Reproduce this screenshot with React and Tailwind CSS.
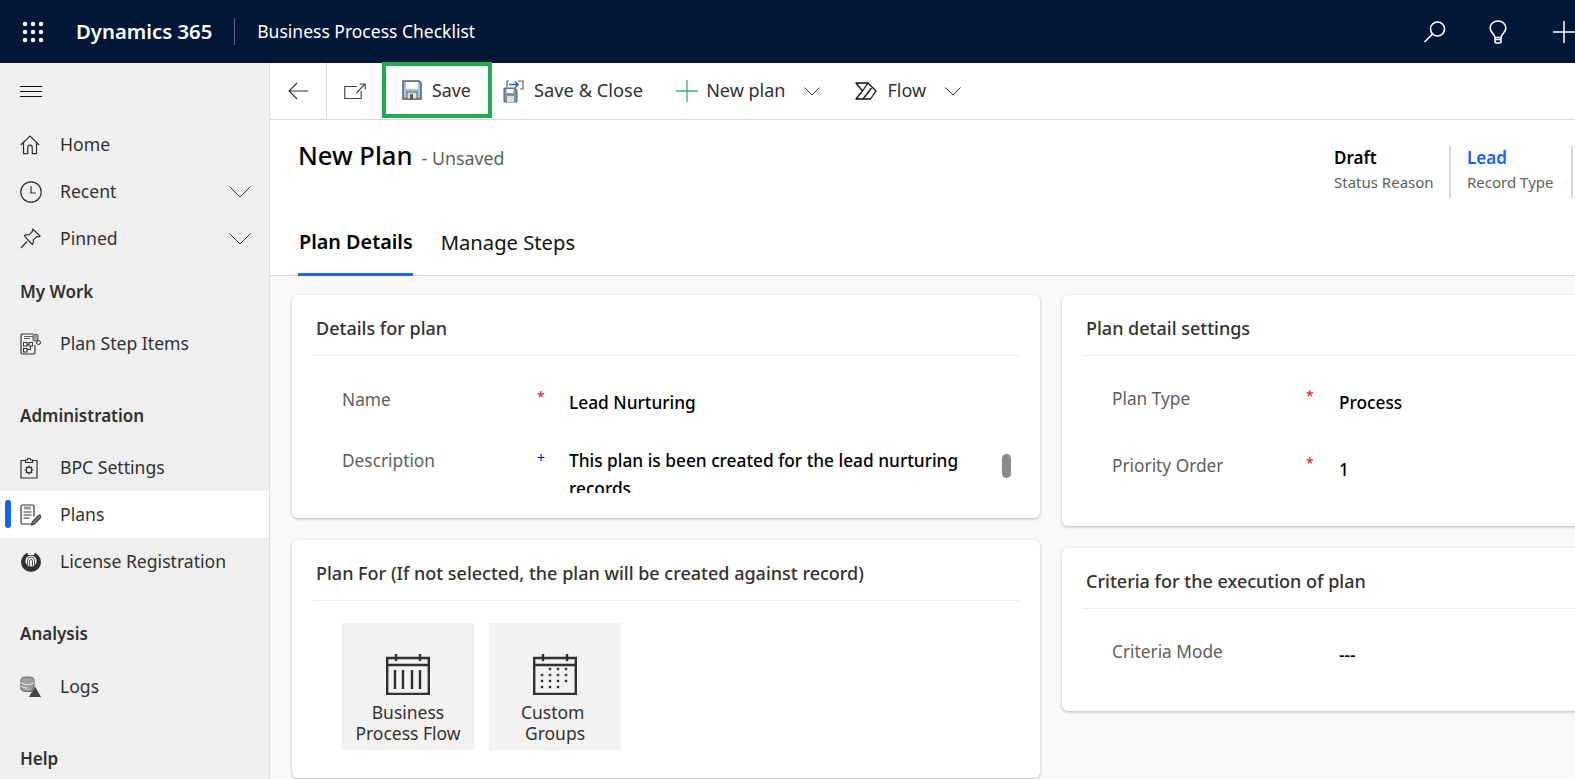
function Chevron({ width, height, className }) {
	return (
		<svg className={className} width={width} height={height} viewBox={`0 0 ${width} ${height}`} fill="none" stroke="#323130" strokeWidth="1">
			<path d={`M.5 .5 ${width / 2} ${height - 1} ${width - 0.5} .5`} />
		</svg>
	)
}

function Waffle() {
	const dots = []
	for (let y = 0; y < 3; y++) {
		for (let x = 0; x < 3; x++) {
			dots.push(<circle key={`${x}-${y}`} cx={3 + x * 8} cy={3 + y * 8} r="2.2" fill="#fff" />)
		}
	}
	return <svg width="22" height="22" viewBox="0 0 22 22">{dots}</svg>
}

function SearchIcon() {
	return (
		<svg width="24" height="24" viewBox="0 0 24 24" fill="none" stroke="#fff" strokeWidth="1.6">
			<circle cx="14.5" cy="9" r="7" />
			<path d="M9.5 14 1.5 22" />
		</svg>
	)
}

function BulbIcon() {
	return (
		<svg width="18" height="24" viewBox="0 0 18 24" fill="none" stroke="#fff" strokeWidth="1.6">
			<path d="M6 17.5C5.5 14 1.2 12.5 1.2 8.2 1.2 4 4.6 1 9 1s7.8 3 7.8 7.2c0 4.3-4.3 5.8-4.8 9.3Z" />
			<path d="M6 17.5v4.2c0 .8.5 1.3 1.2 1.3h3.6c.7 0 1.2-.5 1.2-1.3v-4.2M6 19.5h6" />
		</svg>
	)
}

function Hamburger() {
	return (
		<svg width="22" height="12" viewBox="0 0 22 12" stroke="#111">
			<path d="M0 .5h22M0 5.5h22M0 10.5h22" />
		</svg>
	)
}

function HomeIcon() {
	return (
		<svg width="20" height="20" viewBox="0 0 20 20" fill="none" stroke="#323130" strokeWidth="1.2">
			<path d="M.8 10 10 1l9.2 9M3.5 7.5v11.2h4.2v-6.2a2.3 2.3 0 0 1 4.6 0v6.2h4.2V7.5" />
		</svg>
	)
}

function ClockIcon() {
	return (
		<svg width="22" height="22" viewBox="0 0 22 22" fill="none" stroke="#323130" strokeWidth="1.2">
			<circle cx="11" cy="11" r="10.2" />
			<path d="M11 5v7h5" />
		</svg>
	)
}

function PinIcon() {
	return (
		<svg width="21" height="21" viewBox="0 0 21 21" fill="none" stroke="#323130" strokeWidth="1.2">
			<path d="M13 1.2 20 8l-1.3 1-1.8-.5-3.6 3.4c.5 1.7.2 3.2-.8 4.6L8 12l-3.5-4.5c1.4-1 3-1.2 4.6-.7l3.4-3.7Z" />
			<path d="m7 13.5-6 6.5" />
		</svg>
	)
}

function PlanStepIcon() {
	return (
		<svg width="22" height="22" viewBox="0 0 22 22" fill="none" stroke="#323130" strokeWidth="1">
			<path d="M13 1H2.500A1.500 1.500 0 0 0 1 2.500v17A1.500 1.500 0 0 0 2.500 21h11a1.500 1.500 0 0 0 1.500-1.500V12" strokeWidth="1.2" />
			<path d="M4 3.500h9M4 5.500h6" stroke="#605e5c" />
			<rect x="13" y="1.500" width="5" height="6.500" rx="1" fill="#a19f9d" stroke="#605e5c" />
			<circle cx="18.500" cy="9.500" r="2" />
			<rect x="3.500" y="9.500" width="3.500" height="3.500" />
			<rect x="9" y="9.500" width="3.500" height="3.500" />
			<rect x="3.500" y="15.500" width="3.500" height="3.500" />
			<path d="M7 11.250h2M10.500 13v3.500H7" />
		</svg>
	)
}

function BpcIcon() {
	return (
		<svg width="18" height="22" viewBox="0 0 18 22" fill="none" stroke="#323130" strokeWidth="1.2">
			<path d="M5.500 3.500H1v17.500h16V3.500h-4.500" />
			<path d="M5.500 5.500V3H7.300a1.700 1.700 0 0 1 3.400 0h1.800v2.500Z" />
			<circle cx="9" cy="13" r="2.800" />
			<path d="M9 8.500v1.700M9 15.800v1.700M4.500 13h1.700M11.800 13h1.700M5.800 9.800l1.200 1.200M11 15l1.200 1.200M12.200 9.800 11 11M7 15l-1.200 1.200" />
		</svg>
	)
}

function PlansIcon() {
	return (
		<svg width="21" height="22" viewBox="0 0 21 22" fill="none" stroke="#323130" strokeWidth="1.1">
			<path d="M11 20H2.500A1.500 1.500 0 0 1 1 18.500v-16A1.500 1.500 0 0 1 2.500 1h10A1.500 1.500 0 0 1 14 2.500v10" strokeWidth="1.2" />
			<rect x="4" y="2.500" width="7" height="3" fill="#a19f9d" stroke="none" />
			<path d="M3.500 8h8M3.500 11h8M3.500 14h6" />
			<path d="m11.500 21 .7-3 6.500-6.500c.7-.6 1.500-.5 2 0s.5 1.300 0 1.900L14.300 20Z" fill="#8a8886" stroke="#323130" />
		</svg>
	)
}

function LicenseIcon() {
	return (
		<svg width="22" height="21" viewBox="0 0 22 21">
			<circle cx="11" cy="11" r="10" fill="#323130" />
			<path d="M7 0h8l-1 4H8Z" fill="#efefef" />
			<circle cx="11" cy="10" r="5.600" fill="#efefef" />
			<path d="M7.500 15V9.500a3.500 3.500 0 0 1 7 0V15" fill="none" stroke="#605e5c" strokeWidth="1" />
			<path d="M9.500 15v-5a1.500 1.500 0 0 1 3 0v5" fill="none" stroke="#605e5c" strokeWidth="1" />
		</svg>
	)
}

function LogsIcon() {
	return (
		<svg width="21" height="21" viewBox="0 0 21 21">
			<path d="M1 3.500C1 1.800 4 1 7.500 1s6.500.8 6.500 2.500V10l-2.500 5.500H7.500C4 15.500 1 14.700 1 13Z" fill="#a19f9d" stroke="#605e5c" />
			<path d="M1 6.500c1 1.500 3.500 2 6.500 2s5.500-.5 6.500-2M1 10c1 1.500 3.500 2 6.500 2" fill="none" stroke="#efefef" />
			<path d="M15 10.500 21 21H9Z" fill="#484644" />
		</svg>
	)
}

function BackIcon() {
	return (
		<svg width="20" height="18" viewBox="0 0 20 18" fill="none" stroke="#323130" strokeWidth="1.1">
			<path d="M20 9H1M9 1 1 9l8 8" />
		</svg>
	)
}

function PopoutIcon() {
	return (
		<svg width="22" height="16" viewBox="0 0 22 16" fill="none" strokeWidth="1.2">
			<path d="M13 3.500H.8v12h16.400V8" stroke="#484644" />
			<path d="m12.500 10 8-8.500M15.500 1h5.700v5.500" stroke="#484644" />
		</svg>
	)
}

function SaveIcon() {
	return (
		<svg width="20" height="20" viewBox="0 0 20 20">
			<path d="M1 1h16l2 2v16H1Z" fill="#9cc3e6" stroke="#605e5c" strokeWidth="1.500" />
			<rect x="4" y="2" width="12" height="7" fill="#fff" />
			<rect x="5" y="12" width="10" height="7" fill="#e1dfdd" stroke="#605e5c" />
			<rect x="8" y="14" width="3" height="5" fill="#605e5c" />
		</svg>
	)
}

function SaveCloseIcon() {
	return (
		<svg width="21" height="23" viewBox="0 0 21 23" fill="none">
			<path d="M4 7V1h2M15 1h5v8h-3" stroke="#605e5c" strokeWidth="1.200" />
			<path d="M6 4.500h9M12 1.500l3 3-3 3" stroke="#0f6cbd" strokeWidth="1.600" />
			<path d="M1 8h11l2 2v12H1Z" fill="#7d93a8" stroke="#605e5c" />
			<rect x="3.500" y="9" width="7" height="4" fill="#fff" />
			<rect x="4" y="16" width="7" height="6" fill="#e1dfdd" />
		</svg>
	)
}

function PlusIcon() {
	return (
		<svg className="-mr-[2px]" width="22" height="22" viewBox="0 0 22 22" stroke="#3cb371" strokeWidth="1.300">
			<path d="M11 0v22M0 11h22" />
		</svg>
	)
}

function FlowIcon() {
	return (
		<svg width="22" height="18" viewBox="0 0 22 18" fill="none" stroke="#111" strokeWidth="1.300" strokeLinejoin="round">
			<path d="M1 1h12l8 8-5.500 8H1l6.500-8Z" />
			<path d="M7.500 9 13 1M8 17l8.500-11" />
		</svg>
	)
}

function CalendarBars() {
	return (
		<svg width="44" height="42" viewBox="0 0 44 42" fill="none" stroke="#323130" strokeWidth="2.4">
			<path d="M1.200 5h41.600v36H1.200ZM1.200 12h41.600M10 1v7M34 1v7" />
			<path d="M9 17v19M17 17v19M26 17v19M34 17v19" />
		</svg>
	)
}

function CalendarDots() {
	const dots = [
		[17, 16], [25, 16], [33, 16],
		[9, 22], [17, 22], [25, 22], [33, 22],
		[9, 28], [17, 28], [25, 28], [33, 28],
		[9, 34], [17, 34], [25, 34],
	]
	return (
		<svg width="44" height="42" viewBox="0 0 44 42" fill="none" stroke="#323130" strokeWidth="2.4">
			<path d="M1.200 5h41.600v36H1.200ZM1.200 12h41.600M10 1v7M34 1v7" />
			{dots.map(([x, y]) => (
				<rect key={`${x}-${y}`} x={x - 1.200} y={y - 1.200} width="2.400" height="2.400" fill="#323130" stroke="none" />
			))}
		</svg>
	)
}

function NavItem({ icon, label, chevron, active }) {
	return (
		<div className={`relative flex h-[47px] items-center pl-5 pr-[18px] ${active ? 'bg-white' : ''}`}>
			{active && <span className="absolute left-[5px] top-[9px] h-[28px] w-[6px] rounded-full bg-[#0f62fe]" />}
			<span className="flex w-[40px] items-center">{icon}</span>
			<span className="text-[17.600px] text-[#323130]">{label}</span>
			{chevron && <Chevron className="ml-auto" width={22} height={12} />}
		</div>
	)
}

function NavHeading({ label, className }) {
	return <div className={`flex h-[47px] items-center pl-5 text-[17px] font-semibold text-[#323130] ${className}`}>{label}</div>
}

function Sidebar() {
	return (
		<aside className="w-[270px] shrink-0 border-r border-[#e1dfdd] bg-[#efefef]">
			<div className="flex h-[58px] items-center pb-px pl-5"><Hamburger /></div>
			<NavItem icon={<HomeIcon />} label="Home" />
			<NavItem icon={<ClockIcon />} label="Recent" chevron />
			<NavItem icon={<PinIcon />} label="Pinned" chevron />
			<NavHeading label="My Work" className="mt-[6px]" />
			<div className="mt-[5px]"><NavItem icon={<PlanStepIcon />} label="Plan Step Items" /></div>
			<NavHeading label="Administration" className="mt-[25px]" />
			<div className="mt-[5px]">
				<NavItem icon={<BpcIcon />} label="BPC Settings" />
				<NavItem icon={<PlansIcon />} label="Plans" active />
				<NavItem icon={<LicenseIcon />} label="License Registration" />
			</div>
			<NavHeading label="Analysis" className="mt-[25px]" />
			<div className="mt-[6px]"><NavItem icon={<LogsIcon />} label="Logs" /></div>
			<NavHeading label="Help" className="mt-[25px]" />
		</aside>
	)
}

function ToolButton({ icon, label, chevron, labelSize = 'text-[18px]', className }) {
	return (
		<button className={`flex h-full items-center ${className}`}>
			{icon}
			<span className={`ml-[10px] pb-[2px] text-[#323130] ${labelSize}`}>{label}</span>
			{chevron && <Chevron className="ml-[19px]" width={16} height={9} />}
		</button>
	)
}

function Toolbar() {
	return (
		<div className="flex h-[57px] shrink-0 border-b border-[#d8d8d8] bg-white">
			<button className="flex w-[57px] items-center justify-center border-r border-[#d8d8d8]"><BackIcon /></button>
			<button className="flex w-[55px] items-center justify-center"><PopoutIcon /></button>
			<button className="-mt-px box-border flex h-[56px] w-[110px] items-center border-[4px] border-[#21ad4f] pl-[16px]">
				<SaveIcon />
				<span className="ml-[10px] text-[17.800px] text-[#323130]">Save</span>
			</button>
			<ToolButton icon={<SaveCloseIcon />} label="Save &amp; Close" labelSize="text-[18.300px]" className="ml-[11px]" />
			<ToolButton icon={<PlusIcon />} label="New plan" chevron className="ml-[33px]" />
			<ToolButton icon={<FlowIcon />} label="Flow" chevron className="ml-[35px]" />
		</div>
	)
}

function Stat({ value, label, valueClass, className }) {
	return (
		<div className={`h-[52px] ${className}`}>
			<div className={`text-[17px] leading-[24px] font-semibold ${valueClass}`}>{value}</div>
			<div className="text-[15px] leading-[25px] text-[#605e5c]">{label}</div>
		</div>
	)
}

function RecordHeader() {
	return (
		<div className="h-[156px] shrink-0 border-b border-[#d8d4d0] bg-white pl-[28px]">
			<div className="flex pt-[20px]">
				<div className="flex items-baseline self-start">
					<h1 className="text-[25.600px] leading-[32px] font-medium text-black">New Plan</h1>
					<span className="ml-[9px] text-[17.800px] text-[#605e5c]">- Unsaved</span>
				</div>
				<div className="ml-auto flex pt-[6px] pr-[2px]">
					<Stat value="Draft" label="Status Reason" valueClass="text-black" className="w-[117px] border-r-2 border-[#d8d8d8]" />
					<Stat value="Lead" label="Record Type" valueClass="text-[#0f62fe]" className="ml-[16px] w-[106px] border-r-2 border-[#d8d8d8]" />
				</div>
			</div>
			<div className="mt-[25px] flex">
				<div className="flex h-[53px] items-center border-b-[3px] border-[#2266e3] pb-[12px] pl-px text-[19.800px] font-semibold text-black">Plan Details</div>
				<div className="ml-[28px] flex h-[53px] items-center border-b-[3px] border-transparent pb-[12px] text-[20.200px] text-[#111]">Manage Steps</div>
			</div>
		</div>
	)
}

function Card({ title, className, children }) {
	return (
		<section className={`rounded-[6px] bg-white shadow-[0_1px_3px_rgba(0,0,0,0.28)] ${className}`}>
			<div className="mx-[21px] flex h-[61px] items-center border-b border-[#ececec] pt-[6px] pl-[3px] text-[18px] font-medium text-[#323130]">{title}</div>
			{children}
		</section>
	)
}

function Field({ label, marker = '*', markerClass = 'text-[#e81123]', labelWidth, markerWidth, className, children }) {
	return (
		<div className={`flex ${className}`}>
			<div className={`text-[17.300px] leading-[26px] text-[#605e5c] ${labelWidth}`}>{label}</div>
			<div className={`text-[14px] leading-[20px] ${markerClass} ${markerWidth}`}>{marker}</div>
			{children}
		</div>
	)
}

function FieldValue({ className = 'mt-[3px]', children }) {
	return <div className={`text-[17.300px] leading-[26px] font-medium text-black ${className}`}>{children}</div>
}

function PlanTile({ icon, lines }) {
	return (
		<div className="flex h-[127px] w-[132px] flex-col items-center bg-[#f3f2f1] pt-[30px]">
			{icon}
			<div className="mt-[7px] whitespace-pre text-center text-[17.500px] leading-[21px] text-[#323130]">
				{lines.map(line => <div key={line}>{line}</div>)}
			</div>
		</div>
	)
}

function Content() {
	return (
		<div className="flex min-h-0 flex-1 gap-[22px] bg-[#faf9f8] pt-[19px] pl-[22px]">
			<div className="flex w-[748px] shrink-0 flex-col gap-[22px]">
				<Card title="Details for plan" className="h-[223px]">
					<Field label="Name" labelWidth="w-[195px]" markerWidth="w-[32px]" className="mt-[31px] pl-[50px]">
						<FieldValue>Lead Nurturing</FieldValue>
					</Field>
					<Field label="Description" marker="+" markerClass="text-[#0000ff]" labelWidth="w-[195px]" markerWidth="w-[32px]" className="relative mt-[32px] pl-[50px]">
						<div className="-mt-px h-[46px] w-[410px] overflow-hidden text-[17.300px] leading-[28px] font-medium text-black">
							This plan is been created for the lead nurturing records
						</div>
						<span className="absolute left-[710px] top-[6px] h-[24px] w-[9px] rounded-full bg-[#8a8a8a]" />
					</Field>
				</Card>
				<Card title="Plan For (If not selected, the plan will be created against record)" className="h-[238px]">
					<div className="flex gap-[15px] pt-[22px] pl-[50px]">
						<PlanTile icon={<CalendarBars />} lines={['Business', 'Process Flow']} />
						<PlanTile icon={<CalendarDots />} lines={['Custom ', 'Groups']} />
					</div>
				</Card>
			</div>
			<div className="flex w-[748px] shrink-0 flex-col gap-[22px]">
				<Card title="Plan detail settings" className="h-[231px]">
					<Field label="Plan Type" labelWidth="w-[194px]" markerWidth="w-[33px]" className="mt-[30px] pl-[50px]">
						<FieldValue className="mt-[4px]">Process</FieldValue>
					</Field>
					<Field label="Priority Order" labelWidth="w-[194px]" markerWidth="w-[33px]" className="mt-[37px] pl-[50px]">
						<FieldValue className="mt-[4px]">1</FieldValue>
					</Field>
				</Card>
				<Card title="Criteria for the execution of plan" className="h-[163px]">
					<Field label="Criteria Mode" marker="" labelWidth="w-[194px]" markerWidth="w-[33px]" className="mt-[30px] pl-[50px]">
						<FieldValue>---</FieldValue>
					</Field>
				</Card>
			</div>
		</div>
	)
}

export default function App() {
	return (
		<div className="flex h-screen w-full flex-col overflow-hidden bg-white font-['Noto_Sans',sans-serif]">
			<header className="flex h-[63px] shrink-0 items-center bg-[#001738] text-white">
				<div className="ml-[22px]"><Waffle /></div>
				<div className="ml-[32px] text-[20.300px] font-semibold">Dynamics 365</div>
				<div className="ml-[22px] h-[27px] w-px bg-[#5a6a80]" />
				<div className="ml-[22px] text-[17.500px]">Business Process Checklist</div>
				<div className="ml-auto flex items-center">
					<SearchIcon />
					<div className="ml-[42px]"><BulbIcon /></div>
					<svg className="ml-[46px]" width="22" height="22" viewBox="0 0 22 22" stroke="#fff" strokeWidth="1.500">
						<path d="M11 0v22M0 11h22" />
					</svg>
				</div>
			</header>
			<div className="flex min-h-0 flex-1">
				<Sidebar />
				<main className="flex min-w-0 flex-1 flex-col">
					<Toolbar />
					<RecordHeader />
					<Content />
				</main>
			</div>
		</div>
	)
}
